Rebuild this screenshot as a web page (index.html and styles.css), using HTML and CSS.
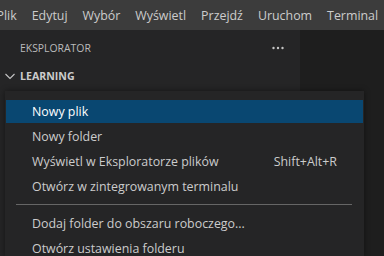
FILE: index.html
```html
<!DOCTYPE html>
<html lang="pl">
<head>
<meta charset="utf-8">
<link rel="stylesheet" href="styles.css">
</head>
<body>
<div class="window">
  <div class="menubar">
    <span class="mb-item">Plik</span>
    <span class="mb-item">Edytuj</span>
    <span class="mb-item">Wybór</span>
    <span class="mb-item">Wyświetl</span>
    <span class="mb-item">Przejdź</span>
    <span class="mb-item">Uruchom</span>
    <span class="mb-item">Terminal</span>
  </div>
  <div class="main">
    <div class="sidebar">
      <div class="sb-header">
        <span class="sb-title">EKSPLORATOR</span>
        <svg class="more" width="16" height="16" viewBox="0 0 16 16"><circle cx="3.5" cy="8" r="1.2" fill="#c5c5c5"/><circle cx="8" cy="8" r="1.2" fill="#c5c5c5"/><circle cx="12.5" cy="8" r="1.2" fill="#c5c5c5"/></svg>
      </div>
      <div class="section">
        <svg class="chev" width="16" height="16" viewBox="0 0 16 16"><path d="M3.5 6l4.5 4.5L12.5 6" fill="none" stroke="#c5c5c5" stroke-width="1.1"/></svg>
        <span class="section-title">LEARNING</span>
      </div>
    </div>
    <div class="editor"></div>
  </div>
  <div class="ctx-menu">
    <div class="item active"><span>Nowy plik</span></div>
    <div class="item"><span>Nowy folder</span></div>
    <div class="item"><span>Wyświetl w Eksploratorze plików</span><span class="kb">Shift+Alt+R</span></div>
    <div class="item"><span>Otwórz w zintegrowanym terminalu</span></div>
    <div class="sep"></div>
    <div class="item"><span>Dodaj folder do obszaru roboczego...</span></div>
    <div class="item"><span>Otwórz ustawienia folderu</span></div>
  </div>
</div>
</body>
</html>
```

FILE: styles.css
```css
* { box-sizing: border-box; }
html, body { margin: 0; padding: 0; }
body {
  width: 384px;
  height: 256px;
  overflow: hidden;
  background: #1e1e1e;
  font-family: "Open Sans", "Noto Sans", sans-serif;
}
.window {
  position: relative;
  width: 384px;
  height: 256px;
  overflow: hidden;
  display: flex;
  flex-direction: column;
}
.menubar {
  height: 30px;
  flex: none;
  background: #3c3c3c;
  display: flex;
  align-items: center;
  margin-left: -11px;
  white-space: nowrap;
}
.mb-item {
  padding: 0 7.5px;
  font-size: 12.4px;
  color: #cccccc;
}
.main {
  flex: 1;
  display: flex;
}
.sidebar {
  width: 300px;
  background: #252526;
}
.editor {
  flex: 1;
  background: #1e1e1e;
}
.sb-header {
  height: 35px;
  display: flex;
  align-items: center;
  padding: 0 14px 0 20px;
}
.sb-title {
  flex: 1;
  font-size: 10.4px;
  color: #bbbbbb;
}
.more { display: block; }
.section {
  height: 22px;
  display: flex;
  align-items: center;
  padding-left: 2px;
}
.chev { display: block; margin-right: 2px; }
.section-title {
  font-size: 10.6px;
  font-weight: 700;
  color: #cccccc;
}
.ctx-menu {
  position: absolute;
  left: 5px;
  top: 91px;
  width: 359px;
  bottom: 0;
  background: #252526;
  border: 1px solid #252526;
  padding-top: 7px;
  box-shadow: 0 0 6px rgba(0,0,0,0.45);
}
.item {
  height: 23px;
  margin: 1px 0 2px;
  display: flex;
  align-items: center;
  justify-content: space-between;
  padding: 0 26px;
  font-size: 12.4px;
  color: #cccccc;
  white-space: nowrap;
}
.item.active {
  background: #094771;
  color: #ffffff;
}
.sep {
  height: 1px;
  margin: 6px 11px 7px 10px;
  background: #666666;
}
```
